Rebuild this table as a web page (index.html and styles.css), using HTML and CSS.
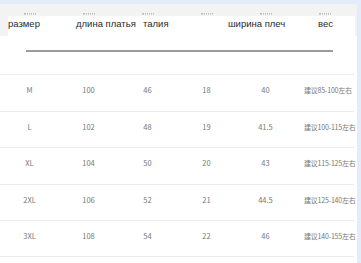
FILE: index.html
```html
<!DOCTYPE html>
<html>
<head>
<meta charset="utf-8">
<link rel="stylesheet" href="styles.css">
</head>
<body>
<div class="page">
  <div class="topband"></div>
  <div class="main">
    <div class="content">
      <div class="head">
        <div class="ghost">
          <i></i><i></i><i></i><i></i><i></i><i></i>
        </div>
        <div class="headcard">
          <span class="h1">размер</span>
          <span class="h2">длина платья</span>
          <span class="h3">талия</span>
          <span class="h4">ширина плеч</span>
          <span class="h5">вес</span>
        </div>
      </div>
      <div class="rule"></div>
      <div class="table">
        <div class="row"><span>M</span><span>100</span><span>46</span><span>18</span><span>40</span><span>建议85-100左右</span></div>
        <div class="row"><span>L</span><span>102</span><span>48</span><span>19</span><span>41.5</span><span>建议100-115左右</span></div>
        <div class="row"><span>XL</span><span>104</span><span>50</span><span>20</span><span>43</span><span>建议115-125左右</span></div>
        <div class="row"><span>2XL</span><span>106</span><span>52</span><span>21</span><span>44.5</span><span>建议125-140左右</span></div>
        <div class="row last"><span>3XL</span><span>108</span><span>54</span><span>22</span><span>46</span><span>建议140-155左右</span></div>
      </div>
    </div>
    <div class="sidebar"></div>
  </div>
</div>
</body>
</html>
```
FILE: styles.css
```css
* { box-sizing: border-box; }
html, body { margin: 0; padding: 0; background: #ffffff; }
.page {
  width: 361px;
  height: 263px;
  overflow: hidden;
  display: flex;
  flex-direction: column;
  background: #ffffff;
}
.topband { height: 4px; background: #e3ecf9; flex: none; }
.main { flex: 1; display: flex; }
.content { width: 357px; display: flex; flex-direction: column; }
.sidebar { width: 4px; background: #e3ecf9; }

.head { background: #f3f3f3; }
.ghost {
  height: 12px;
  padding-top: 9px;
  display: grid;
  grid-template-columns: repeat(6, 59px);
  justify-items: center;
}
.ghost i {
  display: block;
  width: 12px;
  height: 2px;
  border-top: 1px dotted #bdbdbd;
  border-bottom: 1px dotted #d0d0d0;
}
.headcard {
  margin-left: 8px;
  margin-right: 2px;
  height: 20px;
  background: #ffffff;
  display: grid;
  grid-template-columns: 68px 67px 85px 90px auto;
  font: 9.5px/16px "Liberation Sans", Arial, sans-serif;
  color: #2a2a2a;
}

.rule {
  margin: 14px 0 0 26px;
  width: 307px;
  height: 2px;
  background: #9c9c9c;
}

.table { margin-top: 22px; width: 354px; }
.row {
  display: grid;
  grid-template-columns: repeat(6, 59px);
  height: 36.6px;
  border-top: 1px solid #ececec;
  padding-top: 10px;
  font: 7.5px/10px "Noto Sans CJK SC", sans-serif;
  color: #777;
  text-align: center;
}
.row span { white-space: nowrap; }
.row span:last-child {
  text-align: left;
  padding-left: 9px;
  font-size: 7px;
  letter-spacing: -0.2px;
}
.row.last { border-bottom: 1px solid #ececec; }
```
